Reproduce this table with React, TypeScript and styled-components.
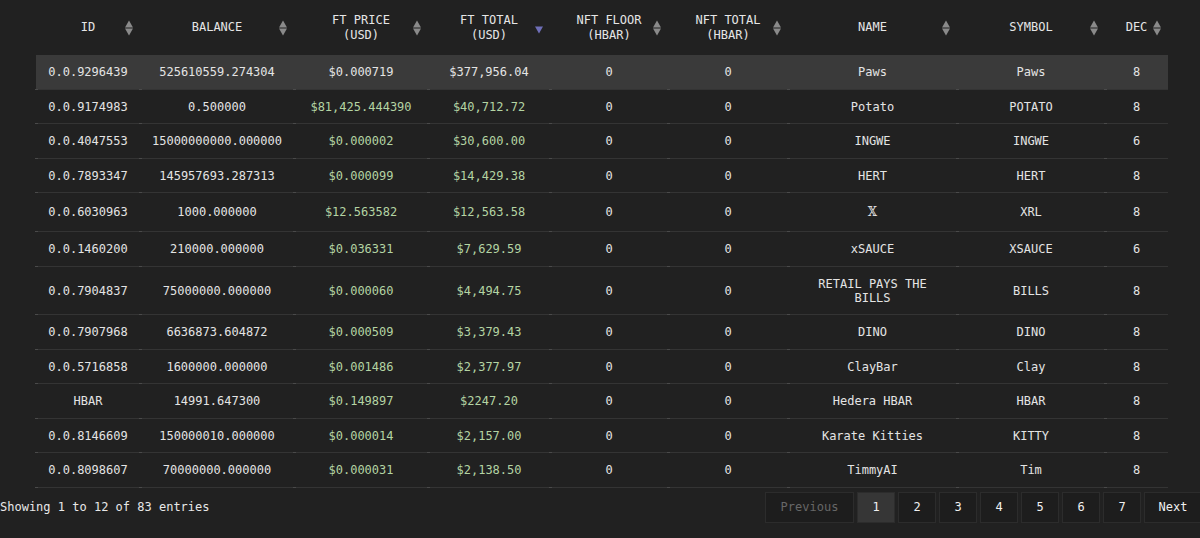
import React from "react";
import styled, { createGlobalStyle, css } from "styled-components";

const Global = createGlobalStyle`
  html, body {
    margin: 0;
    padding: 0;
    background: #212121;
    overflow: hidden;
  }
  body {
    font-family: "DejaVu Sans Mono", "Liberation Mono", monospace;
    font-size: 12px;
    color: #e2e2e2;
  }
`;

const Page = styled.div`
  width: 1200px;
  height: 538px;
  display: flex;
  flex-direction: column;
`;

const Table = styled.table`
  width: 1132px;
  margin-left: 36px;
  border-collapse: collapse;
  table-layout: fixed;
`;

const HeadCell = styled.th`
  position: relative;
  height: 55px;
  padding: 0 10px;
  text-align: center;
  vertical-align: middle;
  font-weight: normal;
  line-height: 15px;
  color: #e6e6e6;
  text-transform: uppercase;
`;

const SortIcon = styled.span<{ $active?: boolean }>`
  position: absolute;
  right: 6px;
  top: 50%;
  transform: translateY(-50%);
  display: flex;
  flex-direction: column;
  gap: 1px;
  width: 9px;
  height: 15px;
  justify-content: ${(p) => (p.$active ? "flex-end" : "center")};
`;

const Tri = styled.span<{ $dir: "up" | "down"; $color: string }>`
  width: 0;
  height: 0;
  border-left: 4.5px solid transparent;
  border-right: 4.5px solid transparent;
  ${(p) =>
    p.$dir === "up"
      ? css`border-bottom: 7px solid ${p.$color};`
      : css`border-top: 7px solid ${p.$color};`}
`;

const Row = styled.tr<{ $active?: boolean }>`
  background: ${(p) => (p.$active ? "#3a3a3a" : "transparent")};
  border-bottom: 1px solid #343434;
`;

const Cell = styled.td<{ $green?: boolean }>`
  position: relative;
  padding: 10px 10px 9.5px;
  line-height: 14px;
  text-align: center;
  vertical-align: middle;
  white-space: normal;
  color: ${(p) => (p.$green ? "#b4d4a3" : "#e4e4e4")};
  &::after {
    content: "";
    position: absolute;
    left: -1px;
    bottom: -1px;
    width: 3px;
    height: 1px;
    background: #4a4a4a;
  }
`;

const TallGlyph = styled.span`
  display: inline-block;
  line-height: 18.5px;
  font-family: "DejaVu Serif", serif;
`;

const Footer = styled.div`
  display: flex;
  justify-content: space-between;
  align-items: center;
  margin-top: 4px;
  margin-right: -2px;
`;

const Info = styled.div`
  color: #e8e8e8;
  line-height: 31px;
`;

const Pager = styled.div`
  display: flex;
  gap: 3px;
`;

const PageBtn = styled.div<{ $w: number; $active?: boolean; $disabled?: boolean }>`
  width: ${(p) => p.$w}px;
  height: 31px;
  box-sizing: border-box;
  display: flex;
  align-items: center;
  justify-content: center;
  border: 1px solid #2c2c2c;
  background: ${(p) => (p.$active ? "#363636" : "#1d1d1d")};
  color: ${(p) => (p.$disabled ? "#676767" : "#f0f0f0")};
  font-size: 12px;
`;

type R = {
  id: string;
  bal: string;
  price: string;
  total: string;
  name: React.ReactNode;
  sym: string;
  dec: string;
};

const rows: R[] = [
  { id: "0.0.9296439", bal: "525610559.274304", price: "$0.000719", total: "$377,956.04", name: "Paws", sym: "Paws", dec: "8" },
  { id: "0.0.9174983", bal: "0.500000", price: "$81,425.444390", total: "$40,712.72", name: "Potato", sym: "POTATO", dec: "8" },
  { id: "0.0.4047553", bal: "15000000000.000000", price: "$0.000002", total: "$30,600.00", name: "INGWE", sym: "INGWE", dec: "6" },
  { id: "0.0.7893347", bal: "145957693.287313", price: "$0.000099", total: "$14,429.38", name: "HERT", sym: "HERT", dec: "8" },
  { id: "0.0.6030963", bal: "1000.000000", price: "$12.563582", total: "$12,563.58", name: <TallGlyph>𝕏</TallGlyph>, sym: "XRL", dec: "8" },
  { id: "0.0.1460200", bal: "210000.000000", price: "$0.036331", total: "$7,629.59", name: "xSAUCE", sym: "XSAUCE", dec: "6" },
  { id: "0.0.7904837", bal: "75000000.000000", price: "$0.000060", total: "$4,494.75", name: "RETAIL PAYS THE BILLS", sym: "BILLS", dec: "8" },
  { id: "0.0.7907968", bal: "6636873.604872", price: "$0.000509", total: "$3,379.43", name: "DINO", sym: "DINO", dec: "8" },
  { id: "0.0.5716858", bal: "1600000.000000", price: "$0.001486", total: "$2,377.97", name: "ClayBar", sym: "Clay", dec: "8" },
  { id: "HBAR", bal: "14991.647300", price: "$0.149897", total: "$2247.20", name: "Hedera HBAR", sym: "HBAR", dec: "8" },
  { id: "0.0.8146609", bal: "150000010.000000", price: "$0.000014", total: "$2,157.00", name: "Karate Kitties", sym: "KITTY", dec: "8" },
  { id: "0.0.8098607", bal: "70000000.000000", price: "$0.000031", total: "$2,138.50", name: "TimmyAI", sym: "Tim", dec: "8" },
];

const widths = [104, 154, 134, 122, 118, 120, 169, 148, 63];

const headers: { label: React.ReactNode; active?: boolean }[] = [
  { label: "ID" },
  { label: "Balance" },
  { label: <>FT Price<br />(USD)</> },
  { label: <>FT Total<br />(USD)</>, active: true },
  { label: <>NFT Floor<br />(HBAR)</> },
  { label: <>NFT Total<br />(HBAR)</> },
  { label: "Name" },
  { label: "Symbol" },
  { label: "Dec" },
];

const Sort = ({ active }: { active?: boolean }) =>
  active ? (
    <SortIcon $active>
      <Tri $dir="down" $color="#6f6fb8" />
      <span style={{ height: 1 }} />
    </SortIcon>
  ) : (
    <SortIcon>
      <Tri $dir="up" $color="#8a8a8a" />
      <Tri $dir="down" $color="#8a8a8a" />
    </SortIcon>
  );

export default function App() {
  return (
    <Page>
      <Global />
      <Table>
        <colgroup>
          {widths.map((w, i) => (
            <col key={i} style={{ width: w }} />
          ))}
        </colgroup>
        <thead>
          <tr>
            {headers.map((h, i) => (
              <HeadCell key={i}>
                {h.label}
                <Sort active={h.active} />
              </HeadCell>
            ))}
          </tr>
        </thead>
        <tbody>
          {rows.map((r, i) => {
            const active = i === 0;
            return (
              <Row key={r.id} $active={active}>
                <Cell>{r.id}</Cell>
                <Cell>{r.bal}</Cell>
                <Cell $green={!active}>{r.price}</Cell>
                <Cell $green={!active}>{r.total}</Cell>
                <Cell>0</Cell>
                <Cell>0</Cell>
                <Cell>{r.name}</Cell>
                <Cell>{r.sym}</Cell>
                <Cell>{r.dec}</Cell>
              </Row>
            );
          })}
        </tbody>
      </Table>
      <Footer>
        <Info>Showing 1 to 12 of 83 entries</Info>
        <Pager>
          <PageBtn $w={89} $disabled>Previous</PageBtn>
          {[1, 2, 3, 4, 5, 6, 7].map((n) => (
            <PageBtn key={n} $w={38} $active={n === 1}>
              {n}
            </PageBtn>
          ))}
          <PageBtn $w={58}>Next</PageBtn>
        </Pager>
      </Footer>
    </Page>
  );
}
